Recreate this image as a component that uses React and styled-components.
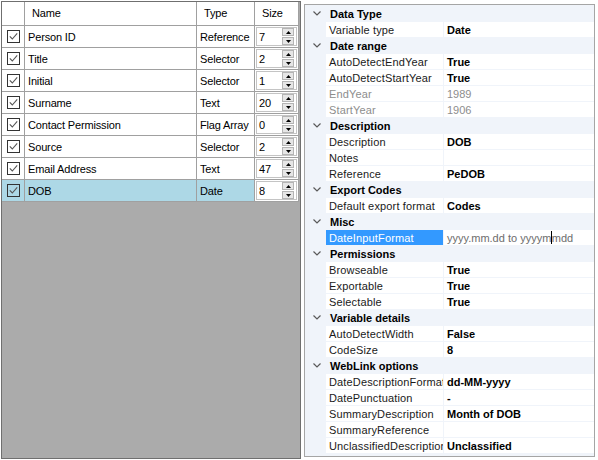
import React from "react";
import styled, { createGlobalStyle } from "styled-components";

const GlobalStyle = createGlobalStyle`
  html, body { margin: 0; padding: 0; background: #ffffff; }
  body { font-family: "Liberation Sans", Arial, sans-serif; font-size: 11px; color: #000; }
  * { box-sizing: border-box; }
`;

const Page = styled.div`
  display: flex;
  align-items: flex-start;
  width: 598px;
  height: 460px;
  padding: 1px 0 0 1px;
  overflow: hidden;
`;

/* ---------- Left data grid ---------- */
const GridPanel = styled.div`
  width: 300px;
  height: 458px;
  border: 1px solid #6f6f6f;
  background: #ababab;
  display: flex;
  flex-direction: column;
  flex-shrink: 0;
  letter-spacing: -0.15px;
`;

const GridRow = styled.div`
  display: grid;
  grid-template-columns: 23px 172px 58px 44px;
  height: ${(p) => (p.$header ? "24px" : "22px")};
`;

const HeaderCell = styled.div`
  background: #ffffff;
  border-right: 1px solid #a0a0a0;
  border-bottom: 1px solid #a0a0a0;
  padding: 5px 0 0 7px;
  white-space: nowrap;
  overflow: hidden;
  color: #000;
`;

const Cell = styled.div`
  background: ${(p) => (p.$selected ? "#add8e6" : "#ffffff")};
  border-right: 1px solid #a0a0a0;
  border-bottom: 1px solid #a0a0a0;
  display: flex;
  align-items: center;
  justify-content: ${(p) => (p.$center ? "center" : "flex-start")};
  padding-left: ${(p) => (p.$center ? "0" : "3px")};
  white-space: nowrap;
  overflow: hidden;
  color: #000;
`;

const SizeCell = styled.div`
  background: #ffffff;
  border-right: 1px solid #a0a0a0;
  border-bottom: 1px solid #a0a0a0;
  padding: 1px;
  display: flex;
`;

const SpinBox = styled.div`
  flex: 1;
  display: flex;
  align-items: center;
  border: 1px solid #c4c4c4;
  background: #ffffff;
  padding: 0 2px;
`;

const SpinValue = styled.span`
  flex: 1;
  color: #000;
`;

const SpinButtons = styled.div`
  display: flex;
  flex-direction: column;
  gap: 1px;
  width: 12px;
`;

const SpinButton = styled.div`
  height: 8px;
  background: #e6e6e6;
  border: 1px solid #b4b4b4;
  display: flex;
  align-items: center;
  justify-content: center;
`;

const Arrow = ({ down }) => (
  <svg width="5" height="3" viewBox="0 0 5 3">
    <polygon points={down ? "0,0 5,0 2.5,3" : "0,3 5,3 2.5,0"} fill="#000" />
  </svg>
);

const CheckBox = () => (
  <svg width="13" height="13" viewBox="0 0 13 13">
    <rect x="0.5" y="0.5" width="12" height="12" fill="none" stroke="#333333" />
    <path d="M2.8 6.4 L5.3 9 L10.2 3.4" fill="none" stroke="#555555" strokeWidth="1.1" />
  </svg>
);

const GridFill = styled.div`
  flex: 1;
  background: #ababab;
`;

const rows = [
  { name: "Person ID", type: "Reference", size: 7 },
  { name: "Title", type: "Selector", size: 2 },
  { name: "Initial", type: "Selector", size: 1 },
  { name: "Surname", type: "Text", size: 20 },
  { name: "Contact Permission", type: "Flag Array", size: 0 },
  { name: "Source", type: "Selector", size: 2 },
  { name: "Email Address", type: "Text", size: 47 },
  { name: "DOB", type: "Date", size: 8, selected: true },
];

/* ---------- Right property grid ---------- */
const PropPanel = styled.div`
  margin: 3px 0 0 3px;
  width: 291px;
  height: 453px;
  border: 1px solid #a5a5a5;
  background: #f0f4fa;
  padding-top: 1px;
  display: flex;
  flex-direction: column;
  flex-shrink: 0;
`;

const CategoryRow = styled.div`
  display: grid;
  grid-template-columns: 21px 1fr;
  height: 16px;
  background: #f0f4fa;
  border-bottom: 1px solid #f0f4fa;
`;

const Chevron = styled.div`
  display: flex;
  align-items: center;
  justify-content: center;
  padding-left: 2px;
`;

const CategoryLabel = styled.div`
  font-weight: bold;
  padding-left: 4px;
  display: flex;
  align-items: center;
  color: #000;
  white-space: nowrap;
`;

const PropRow = styled.div`
  display: grid;
  grid-template-columns: 21px 117px 1fr;
  height: 16px;
`;

const Margin = styled.div`
  background: #f0f4fa;
`;

const PropName = styled.div`
  background: ${(p) => (p.$selected ? "#3399ff" : "#ffffff")};
  color: ${(p) => (p.$selected ? "#ffffff" : p.$disabled ? "#8d8d8d" : "#1a1a1a")};
  border-bottom: 1px solid #f0f4fa;
  padding-left: 3px;
  letter-spacing: 0.15px;
  display: flex;
  align-items: center;
  white-space: nowrap;
  overflow: hidden;
`;

const PropValue = styled.div`
  background: #ffffff;
  border-left: 1px solid #f0f4fa;
  border-bottom: 1px solid #f0f4fa;
  padding-left: 3px;
  display: flex;
  align-items: center;
  white-space: nowrap;
  overflow: hidden;
  font-weight: ${(p) => (p.$plain ? "normal" : "bold")};
  color: ${(p) => (p.$disabled ? "#8d8d8d" : p.$editing ? "#6d6d6d" : "#000")};
`;

const Caret = styled.span`
  display: inline-block;
  width: 1px;
  height: 13px;
  background: #000;
  margin-left: -0.5px;
`;

const ChevronIcon = () => (
  <svg width="8" height="5" viewBox="0 0 8 5">
    <polyline points="0.5,0.5 4,4 7.5,0.5" fill="none" stroke="#5a5a5a" strokeWidth="1.2" />
  </svg>
);

const categories = [
  { title: "Data Type", props: [{ name: "Variable type", value: "Date" }] },
  {
    title: "Date range",
    props: [
      { name: "AutoDetectEndYear", value: "True" },
      { name: "AutoDetectStartYear", value: "True" },
      { name: "EndYear", value: "1989", disabled: true },
      { name: "StartYear", value: "1906", disabled: true },
    ],
  },
  {
    title: "Description",
    props: [
      { name: "Description", value: "DOB" },
      { name: "Notes", value: "" },
      { name: "Reference", value: "PeDOB" },
    ],
  },
  { title: "Export Codes", props: [{ name: "Default export format", value: "Codes" }] },
  { title: "Misc", props: [{ name: "DateInputFormat", editing: true }] },
  {
    title: "Permissions",
    props: [
      { name: "Browseable", value: "True" },
      { name: "Exportable", value: "True" },
      { name: "Selectable", value: "True" },
    ],
  },
  {
    title: "Variable details",
    props: [
      { name: "AutoDetectWidth", value: "False" },
      { name: "CodeSize", value: "8" },
    ],
  },
  {
    title: "WebLink options",
    props: [
      { name: "DateDescriptionFormat", value: "dd-MM-yyyy" },
      { name: "DatePunctuation", value: "-" },
      { name: "SummaryDescription", value: "Month of DOB" },
      { name: "SummaryReference", value: "" },
      { name: "UnclassifiedDescription", value: "Unclassified" },
    ],
  },
];

export default function App() {
  return (
    <Page>
      <GlobalStyle />
      <GridPanel>
        <GridRow $header>
          <HeaderCell />
          <HeaderCell>Name</HeaderCell>
          <HeaderCell>Type</HeaderCell>
          <HeaderCell>Size</HeaderCell>
        </GridRow>
        {rows.map((r) => (
          <GridRow key={r.name}>
            <Cell $center $selected={r.selected}>
              <CheckBox />
            </Cell>
            <Cell $selected={r.selected}>{r.name}</Cell>
            <Cell $selected={r.selected}>{r.type}</Cell>
            <SizeCell>
              <SpinBox>
                <SpinValue>{r.size}</SpinValue>
                <SpinButtons>
                  <SpinButton>
                    <Arrow />
                  </SpinButton>
                  <SpinButton>
                    <Arrow down />
                  </SpinButton>
                </SpinButtons>
              </SpinBox>
            </SizeCell>
          </GridRow>
        ))}
        <GridFill />
      </GridPanel>

      <PropPanel>
        {categories.map((c) => (
          <React.Fragment key={c.title}>
            <CategoryRow>
              <Chevron>
                <ChevronIcon />
              </Chevron>
              <CategoryLabel>{c.title}</CategoryLabel>
            </CategoryRow>
            {c.props.map((p) => (
              <PropRow key={p.name}>
                <Margin />
                <PropName $selected={p.editing} $disabled={p.disabled}>
                  {p.name}
                </PropName>
                {p.editing ? (
                  <PropValue $plain $editing>
                    yyyy.mm.dd to yyyym
                    <Caret />
                    mdd
                  </PropValue>
                ) : (
                  <PropValue $plain={p.disabled} $disabled={p.disabled}>
                    {p.value}
                  </PropValue>
                )}
              </PropRow>
            ))}
          </React.Fragment>
        ))}
      </PropPanel>
    </Page>
  );
}
